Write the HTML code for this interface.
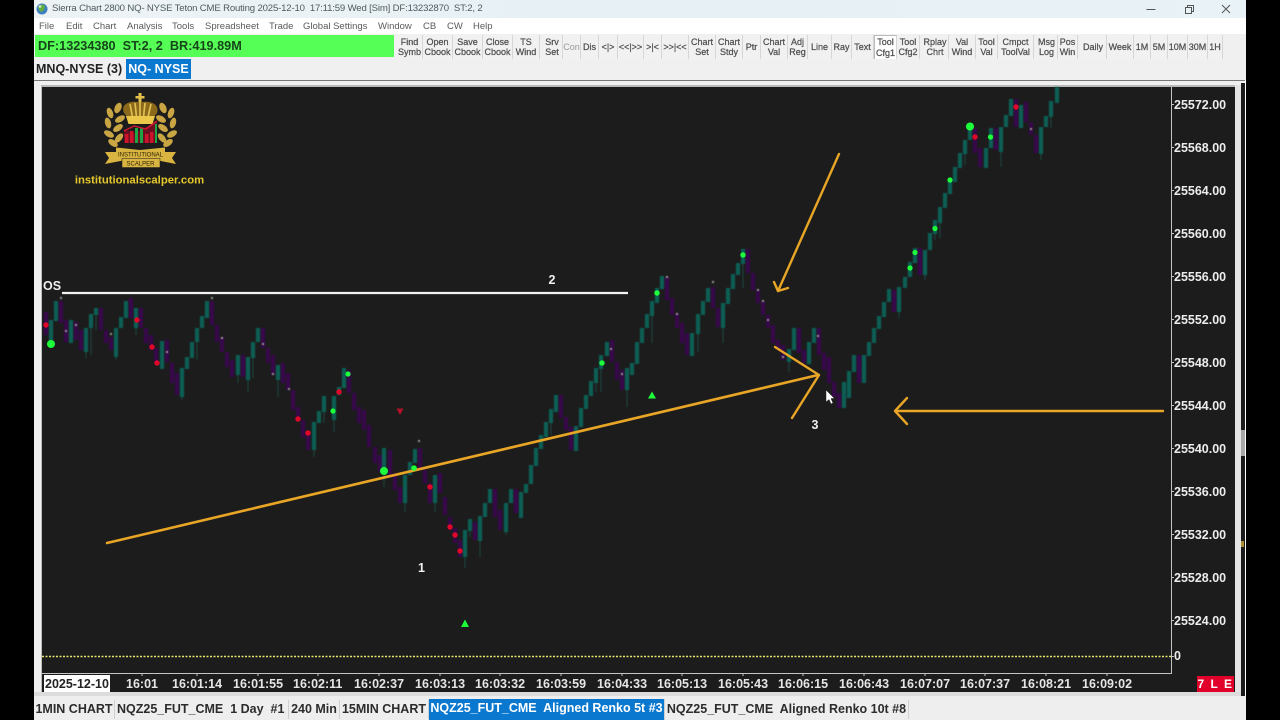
<!DOCTYPE html>
<html lang="en"><head><meta charset="utf-8"><title>Sierra Chart</title>
<style>
html,body{margin:0;padding:0;background:#000;width:1280px;height:720px;overflow:hidden}
body{position:relative;font-family:"Liberation Sans",sans-serif}
div,span{position:absolute;white-space:nowrap}
#win{left:34px;top:0;width:1212px;height:720px;background:#f0f0f0}
#title{left:0;top:0;width:1212px;height:18px;background:linear-gradient(90deg,#edf3f5,#e6f0f5 50%,#e9f2f6)}
#title span{left:18px;top:3px;font-size:9.6px;color:#4d5a5f;letter-spacing:-.17px;white-space:pre}
#menu{left:0;top:18px;width:1212px;height:16px;background:#fff}
#menu span{top:3px;font-size:9.5px;color:#5a5a5a}
#green{left:1px;top:35px;width:359px;height:22px;background:#55ff55;font-weight:bold;font-size:12.700px;color:#16451a;line-height:22px;text-indent:3px;white-space:pre}
.b{top:35px;height:24px;font-size:9px;line-height:10.5px;color:#505050;text-align:center;border-right:1px solid #d6d6d6;display:flex;align-items:center;justify-content:center;font-weight:normal;-webkit-text-stroke:.25px #505050;white-space:pre-line;box-sizing:border-box;background:#f1f1f1}
.n{color:#999;-webkit-text-stroke:0}
#t1{left:2px;top:59px;font-size:12.5px;font-weight:bold;color:#222;line-height:20px}
#t2{left:92px;top:59px;width:65px;height:20px;background:#0a78cf;color:#fff;font-size:12.5px;font-weight:bold;line-height:20px;text-align:center}
#sep{left:0;top:80px;width:1212px;height:1px;background:#777}
#frame{left:7px;top:85px;width:1194px;height:607px;background:#1c1c1c;border-top:2px solid #b9b9b9;border-left:1px solid #bdbdbd;box-sizing:border-box}
.y{left:1174px;font-size:12.5px;font-weight:bold;color:#ececec;line-height:14px}
.x{top:677px;font-size:12.5px;font-weight:bold;color:#e6e6e6;line-height:14px}
.tab{top:700px;height:19px;line-height:19px;font-size:12.5px;font-weight:bold;color:#2c2c2c;text-align:center;border-right:1px solid #cfcfcf;white-space:pre;box-sizing:border-box}
</style></head><body>
<div id="win">
<div id="title"><span>Sierra Chart 2800 NQ- NYSE Teton CME Routing 2025-12-10  17:11:59 Wed [Sim] DF:13232870  ST:2, 2</span>
<svg style="position:absolute;left:2px;top:3px" width="12" height="12" viewBox="0 0 12 12"><circle cx="6" cy="6" r="5.5" fill="#3f7fc0"/><path d="M2 4C4 1 8 1 9 3L8 7 5 9 3 7Z" fill="#5fae3e"/><circle cx="4" cy="3.5" r="1.4" fill="#cfe6c8"/></svg>
<svg style="position:absolute;left:1110px;top:2px" width="90" height="14" viewBox="0 0 90 14"><path d="M2.500 7.500H11.500" stroke="#555" stroke-width="1"/><path d="M41.500 5.500h6v6h-6zM43.500 5.500v-2h6v6h-2" fill="none" stroke="#555"/><path d="M78 3l8 8M86 3l-8 8" stroke="#555" stroke-width="1"/></svg></div>
<div id="menu"><span style="left:5px">File</span><span style="left:32px">Edit</span><span style="left:59px">Chart</span><span style="left:93px">Analysis</span><span style="left:138px">Tools</span><span style="left:171px">Spreadsheet</span><span style="left:235px">Trade</span><span style="left:269px">Global Settings</span><span style="left:344px">Window</span><span style="left:389px">CB</span><span style="left:413px">CW</span><span style="left:439px">Help</span></div>
<div id="green">DF:13234380  ST:2, 2  BR:419.89M</div>
<div class="b" style="left:363px;width:26px">Find
Symb</div><div class="b" style="left:389px;width:30px">Open
Cbook</div><div class="b" style="left:419px;width:30px">Save
Cbook</div><div class="b" style="left:449px;width:30px">Close
Cbook</div><div class="b" style="left:479px;width:27px">TS
Wind</div><div class="b" style="left:506px;width:21px;margin-left:2px">Srv
Set</div><div class="b n" style="left:529px;width:18px">Con</div><div class="b" style="left:547px;width:18px">Dis</div><div class="b" style="left:565px;width:19px">&lt;|&gt;</div><div class="b" style="left:584px;width:26px">&lt;&lt;|&gt;&gt;</div><div class="b" style="left:610px;width:18px">&gt;|&lt;</div><div class="b" style="left:628px;width:27px">&gt;&gt;|&lt;&lt;</div><div class="b" style="left:655px;width:27px">Chart
Set</div><div class="b" style="left:682px;width:27px">Chart
Stdy</div><div class="b" style="left:709px;width:18px">Ptr</div><div class="b" style="left:727px;width:27px">Chart
Val</div><div class="b" style="left:754px;width:20px">Adj
Reg</div><div class="b" style="left:774px;width:24px">Line</div><div class="b" style="left:798px;width:20px">Ray</div><div class="b" style="left:818px;width:22px">Text</div><div class="b" style="left:840px;width:23px;background:#fff;border-left:1px solid #bbb;border-top:1px solid #bbb">Tool
Cfg1</div><div class="b" style="left:863px;width:23px">Tool
Cfg2</div><div class="b" style="left:888px;width:27px">Rplay
Chrt</div><div class="b" style="left:915px;width:27px">Val
Wind</div><div class="b" style="left:942px;width:22px">Tool
Val</div><div class="b" style="left:964px;width:36px">Cmpct
ToolVal</div><div class="b" style="left:1002px;width:22px">Msg
Log</div><div class="b" style="left:1024px;width:20px">Pos
Win</div><div class="b" style="left:1046px;width:27px">Daily</div><div class="b" style="left:1073px;width:27px">Week</div><div class="b" style="left:1100px;width:17px">1M</div><div class="b" style="left:1117px;width:17px">5M</div><div class="b" style="left:1134px;width:20px">10M</div><div class="b" style="left:1154px;width:20px">30M</div><div class="b" style="left:1174px;width:15px">1H</div>
<div id="t1">MNQ-NYSE (3)</div><div id="t2">NQ- NYSE</div>
<div id="sep"></div>
<div id="frame"></div>
<div style="left:1207px;top:83px;width:5px;height:637px;background:#1a1a1a"></div>
<div style="left:1207px;top:430px;width:5px;height:26px;background:#a8a8a8"></div>
<div style="left:1207px;top:541px;width:3px;height:6px;background:#a89030"></div>
<div style="left:1211px;top:80px;width:1px;height:640px;background:#fff"></div>
<div style="left:1201px;top:85px;width:6px;height:635px;background:#e4e4e4"></div>
<div style="left:0;top:692px;width:1207px;height:6px;background:#dcdcdc"></div>
<div style="left:0;top:696px;width:1212px;height:24px;background:#eeeeee"></div>
</div>

<svg style="position:absolute;left:0;top:0" width="1280" height="720" viewBox="0 0 1280 720">
<g style="filter:blur(.45px)">
<!-- wicks -->
<path fill="none" stroke="#1f4a45" stroke-width="1" d="M86 352V358M91 328V355M96 315V330M116 357V360M136 328V335M182 397V400M197 342V360M238 375V383M248 380V392M253 358V378M278 380V397M314 450V457M324 412V423M334 420V432M384 472V487M405 503V512M435 503V512M465 557V568M470 531V537M480 541V557M506 532V535M551 423V435M596 383V392M601 369V392M627 390V407M652 316V343M698 334V352M723 328V343M743 264V288M789 362V372M899 312V318M925 275V280M935 234V240M940 223V238M965 154V165M1001 152V167M1041 154V160M1051 117V128"/>
<!-- purple bodies -->
<path fill="none" stroke="#37094b" stroke-width="4.200" d="M46 312V335M61 301V323M66 320V342M76 322V340M81 330V350M101 308V330M106 330V343M111 337V350M131 298V318M141 308V328M146 328V343M151 335V350M156 348V362M167 340V362M172 363V383M177 373V395M212 301V325M217 325V342M222 337V352M227 352V367M232 360V377M243 355V377M263 328V348M268 348V363M273 355V375M283 363V383M288 373V390M293 390V410M298 407V420M303 420V437M308 433V450M349 370V393M354 393V410M359 407V423M364 410V430M369 425V447M375 447V463M380 455V472M390 450V477M395 473V490M400 487V503M420 448V470M425 470V483M430 483V503M440 473V493M445 497V515M450 517V530M455 528V543M460 540V557M475 522V540M495 489V517M500 510V530M516 489V513M561 395V418M566 417V430M571 427V450M612 340V362M617 362V380M622 370V390M667 277V300M672 298V315M677 313V328M682 323V343M687 333V355M713 287V308M718 308V327M748 249V273M753 273V290M758 290V303M763 302V315M768 315V328M773 325V343M778 340V350M783 345V360M799 328V353M804 350V363M819 328V355M824 353V370M829 357V383M834 382V397M839 393V408M859 355V383M894 290V312M920 248V275M975 128V153M980 148V167M996 128V150M1016 99V127M1026 102V122M1031 122V135M1036 135V153"/>
<!-- teal bodies -->
<path fill="none" stroke="#0d5f55" stroke-width="4.200" d="M51 320V343M56 301V321M71 320V343M86 328V352M91 314V328M96 308V315M116 328V357M121 317V328M126 301V318M136 308V328M162 341V369M182 368V397M187 357V369M192 342V358M197 328V342M202 316V328M207 301V318M238 355V375M248 357V380M253 342V358M258 328V342M278 365V380M314 422V450M319 411V423M324 396V412M334 396V420M339 387V395M344 368V388M384 448V472M405 475V503M410 462V475M415 449V463M435 475V503M465 530V557M470 519V531M480 516V541M485 503V517M490 489V503M506 503V532M511 489V503M521 492V518M526 484V493M531 465V484M536 448V466M541 435V449M546 422V437M551 409V423M556 395V412M576 426V451M581 408V427M586 395V409M591 381V396M596 368V383M601 355V369M607 342V356M627 368V390M632 363V375M637 342V364M642 328V343M647 314V328M652 301V316M657 288V303M662 276V289M692 333V356M698 314V334M703 301V315M708 288V302M723 303V328M728 288V304M733 274V289M738 263V275M743 249V264M789 349V362M794 328V350M809 342V364M814 328V343M844 382V408M849 371V398M854 355V372M864 355V383M869 342V356M874 328V343M879 316V329M884 302V317M889 289V302M899 287V312M905 277V288M910 262V277M915 248V263M925 250V275M930 233V250M935 220V234M940 207V223M945 193V208M950 180V194M955 167V182M960 153V168M965 140V154M970 126V140M986 148V168M991 128V148M1001 127V152M1006 115V127M1011 99V116M1021 105V128M1041 127V154M1046 116V127M1051 101V117M1057 87V103"/>
<!-- small dots -->
<g fill="#9a9a9a"><rect x="60" y="297" width="2" height="2"/><rect x="65" y="330" width="2" height="2"/><rect x="75" y="324" width="2" height="2"/><rect x="110" y="333" width="2" height="2"/><rect x="166" y="351" width="2" height="2"/><rect x="211" y="297" width="2" height="2"/><rect x="221" y="337" width="2" height="2"/><rect x="262" y="343" width="2" height="2"/><rect x="272" y="373" width="2" height="2"/><rect x="288" y="388" width="2" height="2"/><rect x="418" y="440" width="2" height="2"/><rect x="610" y="348" width="2" height="2"/><rect x="621" y="373" width="2" height="2"/><rect x="666" y="276" width="2" height="2"/><rect x="676" y="313" width="2" height="2"/><rect x="712" y="281" width="2" height="2"/><rect x="757" y="289" width="2" height="2"/><rect x="762" y="300" width="2" height="2"/><rect x="767" y="319" width="2" height="2"/><rect x="782" y="356" width="2" height="2"/><rect x="817" y="335" width="2" height="2"/><rect x="1030" y="128" width="2" height="2"/></g>
</g>
<!-- white line -->
<path d="M62 293H628" stroke="#f2f2f2" stroke-width="2.200"/>
<!-- gold lines -->
<g fill="none" stroke="#e8a526" stroke-width="2.400" stroke-linecap="round" stroke-linejoin="round">
<path d="M107 543L818 375" stroke-width="2.600"/><path d="M775 347L819 375L792 418"/>
<path d="M839 154L778 291"/><path d="M774 282L778 291L788 288"/>
<path d="M1163 411H896"/><path d="M907 398L895 411L907 424"/>
</g>
<!-- green dots -->
<g fill="#1dff3a"><circle cx="51" cy="344" r="4"/><circle cx="384" cy="471" r="4"/><circle cx="970" cy="126.500" r="4"/><circle cx="348" cy="374" r="2.600"/><circle cx="333" cy="411" r="2.600"/><circle cx="414" cy="468" r="2.800"/><circle cx="602" cy="363" r="2.700"/><circle cx="657" cy="293" r="2.700"/><circle cx="743" cy="255" r="2.700"/><circle cx="910" cy="268" r="2.600"/><circle cx="915" cy="252.500" r="2.600"/><circle cx="935" cy="228.500" r="2.600"/><circle cx="950" cy="180" r="2.600"/><circle cx="990.500" cy="137" r="2.600"/>
<path d="M652 391.500L656 398.500H648ZM465 619.500L469 627H461Z"/></g>
<!-- red dots -->
<g fill="#e00828"><circle cx="46" cy="325" r="2.700"/><circle cx="137" cy="320" r="2.700"/><circle cx="152" cy="347" r="2.700"/><circle cx="157" cy="363" r="2.700"/><circle cx="298" cy="419" r="2.700"/><circle cx="308" cy="433" r="2.700"/><circle cx="339" cy="392" r="2.700"/><circle cx="430" cy="487" r="2.700"/><circle cx="450" cy="527" r="2.700"/><circle cx="455" cy="535" r="2.700"/><circle cx="460" cy="551" r="2.700"/><circle cx="975" cy="137" r="2.700"/><circle cx="1016" cy="107" r="2.700"/><path d="M396.500 408.500H403.500L400 415Z" fill="#b01028"/></g>
<!-- cursor -->
<path d="M826 390V402L829 399.500 831 404 833 403 831 398.500H834.500Z" fill="#fff" stroke="#222" stroke-width=".5"/>
<!-- dotted zero line -->
<path d="M42 656.500H1171" stroke="#e6e670" stroke-width="1.600" stroke-dasharray="2 1.500"/>
<!-- plot borders -->
<path d="M1171.500 87V673.500H42" fill="none" stroke="#c4c4c4" stroke-width="1"/>
<path d="M1171 104.500h3M1171 147.500h3M1171 190.500h3M1171 233.500h3M1171 276.500h3M1171 319.500h3M1171 362.500h3M1171 405.500h3M1171 448.500h3M1171 491.500h3M1171 534.500h3M1171 577.500h3M1171 620.500h3M1171 656.500h3M142 673v3M197 673v3M258 673v3M318 673v3M379 673v3M440 673v3M500 673v3M561 673v3M622 673v3M682 673v3M743 673v3M803 673v3M864 673v3M925 673v3M985 673v3M1046 673v3M1107 673v3" stroke="#c4c4c4" stroke-width="1"/>
<!-- logo -->
<g stroke="none" style="filter:blur(.35px)">
<path d="M138.500 93h3v3h3v2.500h-3v4h-3v-4h-3V96h3z" fill="#e3c04a"/>
<path d="M124 113C120 104 130 100 140 102.500 150 100 160 104 157 113L153 118H128Z" fill="#8a6a1a"/>
<path d="M130 104L132.500 117M135 103L136.500 117M140 102V117M145 103L143.500 117M151 104L148 117" stroke="#e0bd52" stroke-width="1.700" fill="none"/>
<path d="M126 116H155L152.500 124H128.500Z" fill="#ecc84a"/>
<path d="M124 143V129L134 133 146 127 157 122V143Z" fill="#6e0e20"/>
<path d="M125 134h3.500v9H125zM130 131h3.500v12H130zM145 134h3.500v9H145zM150 132h3.500v11H150z" fill="#cc142c"/>
<path d="M135 128h3v15h-3zM140 128h3v15h-3zM155 124h2v19h-2z" fill="#1ca544"/>
<path d="M124 131L134 126 146 129 157 121" stroke="#d01a32" stroke-width="1.400" fill="none"/>
<g fill="#c9a544">
<ellipse cx="118" cy="108" rx="3.300" ry="5.500" transform="rotate(25 118 108)"/><ellipse cx="110" cy="113" rx="3" ry="5.500" transform="rotate(-20 110 113)"/><ellipse cx="120" cy="119" rx="5.500" ry="3" transform="rotate(-30 120 119)"/><ellipse cx="108" cy="123" rx="3" ry="5.500" transform="rotate(-15 108 123)"/><ellipse cx="118" cy="128" rx="5.500" ry="3" transform="rotate(-35 118 128)"/><ellipse cx="109" cy="134" rx="5.500" ry="3" transform="rotate(30 109 134)"/><ellipse cx="119" cy="138" rx="5.500" ry="3" transform="rotate(-50 119 138)"/><ellipse cx="113" cy="143" rx="5.500" ry="3" transform="rotate(35 113 143)"/>
<ellipse cx="163" cy="108" rx="3.300" ry="5.500" transform="rotate(-25 163 108)"/><ellipse cx="171" cy="113" rx="3" ry="5.500" transform="rotate(20 171 113)"/><ellipse cx="161" cy="119" rx="5.500" ry="3" transform="rotate(30 161 119)"/><ellipse cx="173" cy="123" rx="3" ry="5.500" transform="rotate(15 173 123)"/><ellipse cx="163" cy="128" rx="5.500" ry="3" transform="rotate(35 163 128)"/><ellipse cx="172" cy="134" rx="5.500" ry="3" transform="rotate(-30 172 134)"/><ellipse cx="162" cy="138" rx="5.500" ry="3" transform="rotate(50 162 138)"/><ellipse cx="168" cy="143" rx="5.500" ry="3" transform="rotate(-35 168 143)"/></g>
<path d="M105 152H116V147.500L140 150 165 147.500V152H176L172 158 176 164 158 160.500H123L105 164 109 158Z" fill="#dab440"/>
<rect x="122" y="158.500" width="38" height="9" fill="#dab440" stroke="#1c1c1c" stroke-width=".5"/>
</g>
<text x="140.500" y="156.500" text-anchor="middle" font-family="Liberation Sans" font-size="6" fill="#2a2208">INSTITUTIONAL</text>
<text x="140.500" y="165.500" text-anchor="middle" font-family="Liberation Sans" font-size="6" fill="#2a2208">SCALPER</text>
<text x="139.500" y="183.500" text-anchor="middle" font-family="Liberation Sans" font-weight="bold" font-size="11.300" fill="#e6c82c">institutionalscalper.com</text>
<!-- chart labels -->
<g font-family="Liberation Sans" font-weight="bold" font-size="12.500" fill="#f0f0f0">
<text x="43" y="290">OS</text><text x="548.500" y="284">2</text><text x="418" y="572">1</text><text x="811.500" y="429">3</text></g>
<!-- bottom-axis highlight -->
<rect x="44" y="675" width="66" height="17" fill="#fff"/>
<rect x="1197" y="676" width="37" height="16" fill="#e0002a"/>
<text x="1215.500" y="688" text-anchor="middle" font-family="Liberation Sans" font-weight="bold" font-size="12" fill="#fff" xml:space="preserve" letter-spacing="1.500">7 L E</text>
</svg>

<div class="y" style="top:98px">25572.00</div><div class="y" style="top:141px">25568.00</div><div class="y" style="top:184px">25564.00</div><div class="y" style="top:227px">25560.00</div><div class="y" style="top:270px">25556.00</div><div class="y" style="top:313px">25552.00</div><div class="y" style="top:356px">25548.00</div><div class="y" style="top:399px">25544.00</div><div class="y" style="top:442px">25540.00</div><div class="y" style="top:485px">25536.00</div><div class="y" style="top:528px">25532.00</div><div class="y" style="top:571px">25528.00</div><div class="y" style="top:614px">25524.00</div><div class="y" style="top:649px">0</div>

<div class="x" style="left:45px;color:#222">2025-12-10</div><div class="x" style="left:126px">16:01</div><div class="x" style="left:172px">16:01:14</div><div class="x" style="left:233px">16:01:55</div><div class="x" style="left:293px">16:02:11</div><div class="x" style="left:354px">16:02:37</div><div class="x" style="left:415px">16:03:13</div><div class="x" style="left:475px">16:03:32</div><div class="x" style="left:536px">16:03:59</div><div class="x" style="left:597px">16:04:33</div><div class="x" style="left:657px">16:05:13</div><div class="x" style="left:718px">16:05:43</div><div class="x" style="left:778px">16:06:15</div><div class="x" style="left:839px">16:06:43</div><div class="x" style="left:900px">16:07:07</div><div class="x" style="left:960px">16:07:37</div><div class="x" style="left:1021px">16:08:21</div><div class="x" style="left:1082px">16:09:02</div>

<div class="tab" style="left:34px;width:81px">1MIN CHART</div><div class="tab" style="left:115px;width:174px;text-align:left;text-indent:2px">NQZ25_FUT_CME  1 Day  #1</div><div class="tab" style="left:289px;width:51px">240 Min</div><div class="tab" style="left:340px;width:89px">15MIN CHART</div><div class="tab" style="left:429px;width:236px;background:#0a78cf;color:#fff;top:699px;height:21px">NQZ25_FUT_CME  Aligned Renko 5t #3</div><div class="tab" style="left:665px;width:244px">NQZ25_FUT_CME  Aligned Renko 10t #8</div>
</body></html>
